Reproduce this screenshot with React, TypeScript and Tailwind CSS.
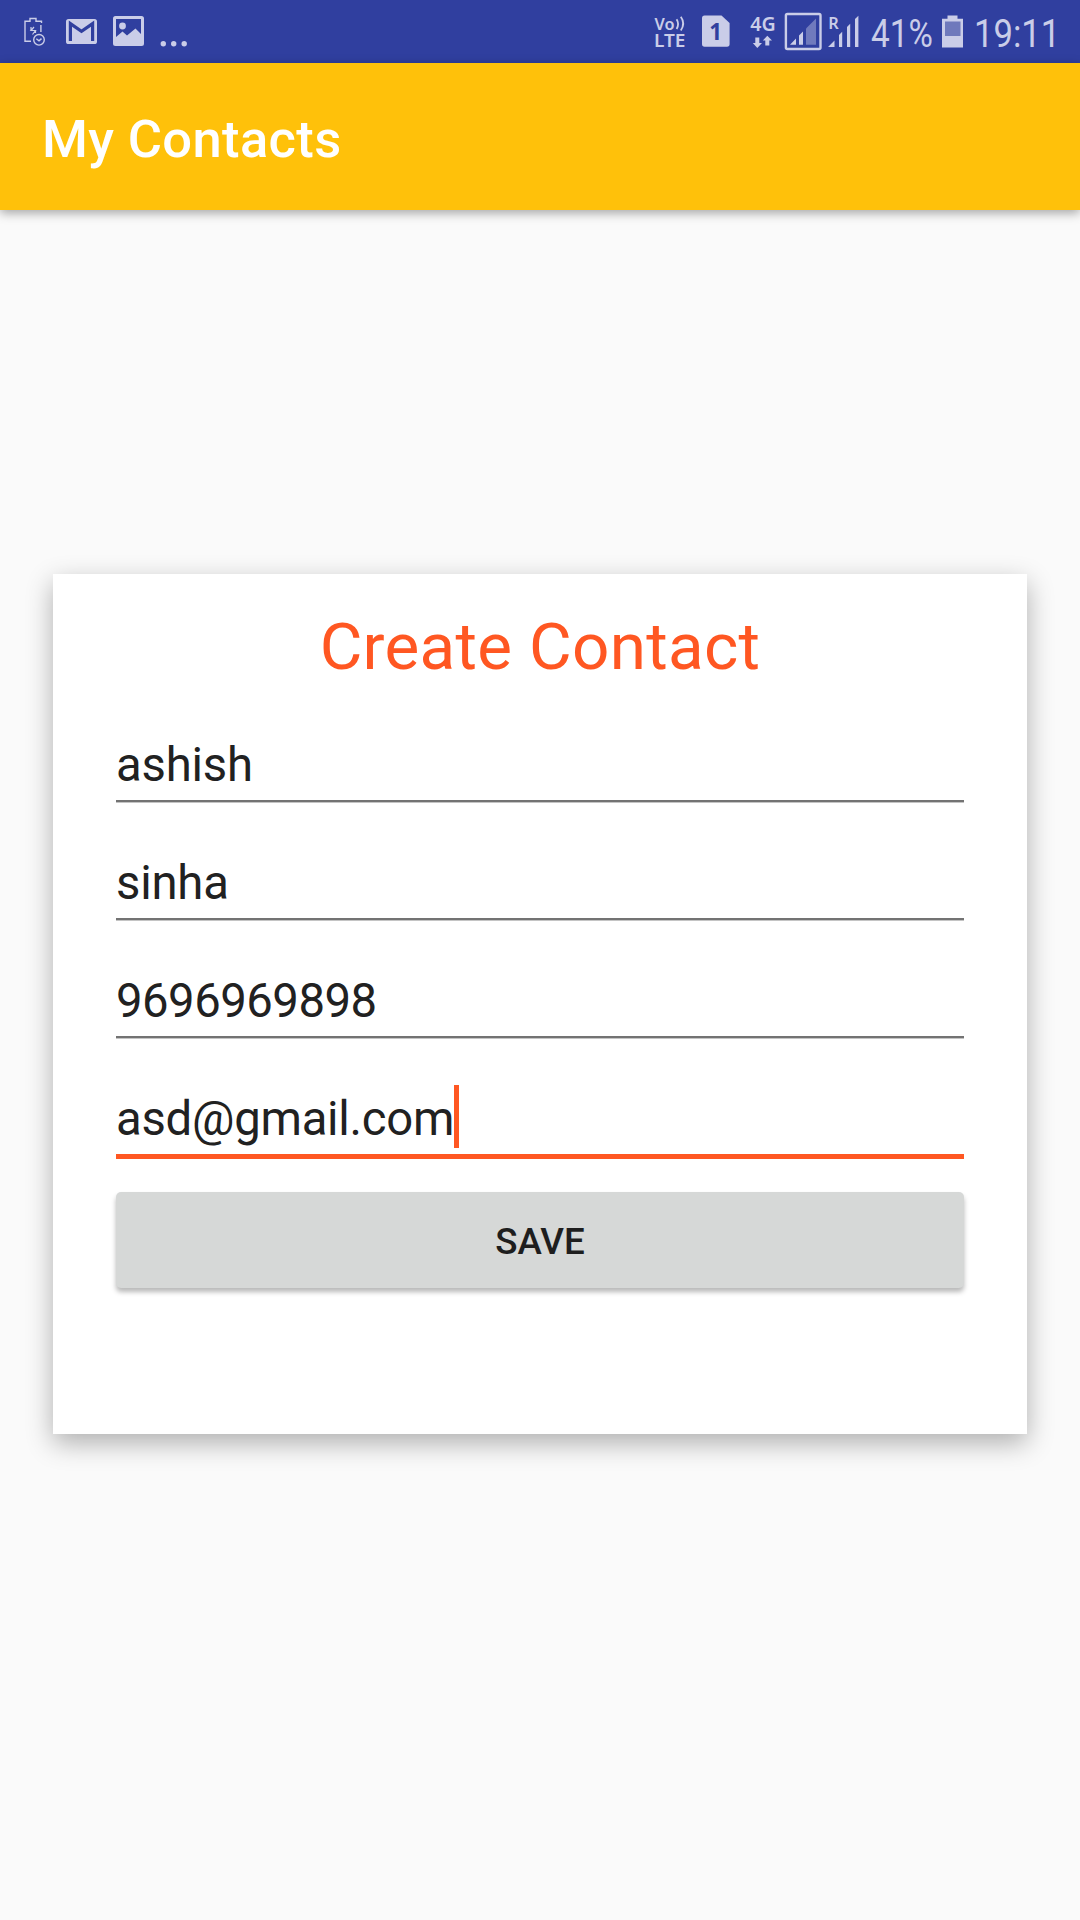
import React from "react";

const INK = "#cacde8";

function StatusBar() {
  return (
    <div className="flex h-[63px] w-full shrink-0 items-start bg-[#303f9f] text-[#cacde8]">
      {/* power saving */}
      <svg className="ml-[22px] mt-[14px] h-[34px] w-[26px] shrink-0" viewBox="22 14 26 34" fill="none" stroke={INK} strokeWidth="1.4">
        <path d="M31 41.3H25V21.3H30V18.5H36V21.3H41.5V23M40.9 25V32" />
        <path d="M34 27L31 30.5H35.5L32.5 34.5M31 27V30.5M35.5 30.5V33" strokeWidth="1.2" />
        <circle cx="39" cy="39.8" r="5.3" />
        <path d="M36.3 38.8L39 40.8L41.5 38.6" />
      </svg>
      {/* mail */}
      <svg className="ml-[16px] mt-[14px] h-[34px] w-[36px] shrink-0" viewBox="64 14 36 34">
        <rect x="66" y="19" width="31" height="25" rx="2.6" fill={INK} />
        <path d="M70.4 41V23.6L81.5 31.2L92.6 23.6V41" fill="none" stroke="#303f9f" strokeWidth="3.2" />
      </svg>
      {/* picture */}
      <svg className="ml-[12px] mt-[14px] h-[34px] w-[34px] shrink-0" viewBox="112 14 34 34">
        <path fillRule="evenodd" fill={INK} d="M115.5 16H141.5Q144 16 144 18.5V43.5Q144 46 141.5 46H115.5Q113 46 113 43.5V18.5Q113 16 115.5 16ZM116 19V37L122.5 31.5L127 35.5L135.5 28.5L141 34V19Z" />
        <circle cx="122.5" cy="26" r="3.4" fill={INK} />
      </svg>
      <svg className="ml-[14px] mt-[39px] h-[9px] w-[30px] shrink-0" viewBox="160 39 30 9" fill={INK}>
        <circle cx="163.3" cy="43.7" r="2.7" />
        <circle cx="173.7" cy="43.7" r="2.7" />
        <circle cx="184.2" cy="43.7" r="2.7" />
      </svg>

      {/* VoLTE */}
      <svg className="ml-[462px] mt-[12px] h-[38px] w-[38px] shrink-0 overflow-visible" viewBox="652 12 38 38" fill={INK} fontFamily="Noto Sans, sans-serif" fontWeight="600">
        <text x="654.6" y="29.6" fontSize="16.5" textLength="20" lengthAdjust="spacingAndGlyphs">Vo</text>
        <path d="M676.6 19.2Q679.6 24 676.6 29M680.8 16.8Q685.6 23.5 680.8 30.4" fill="none" stroke={INK} strokeWidth="1.8" />
        <text x="654" y="47" fontSize="17" textLength="31.5" lengthAdjust="spacingAndGlyphs">LTE</text>
      </svg>
      {/* SIM 1 */}
      <svg className="ml-[10px] mt-[14px] h-[34px] w-[32px] shrink-0" viewBox="700 14 32 34" fontFamily="Noto Sans, sans-serif" fontWeight="700">
        <path d="M704.5 15.5H721.5L729.6 23V44Q729.6 46.7 727 46.7H704.5Q702 46.7 702 44V18Q702 15.5 704.5 15.5Z" fill={INK} />
        <text x="709.3" y="40" fontSize="22.5" fill="#303f9f">1</text>
      </svg>
      {/* 4G */}
      <svg className="ml-[16px] mt-[12px] h-[38px] w-[30px] shrink-0 overflow-visible" viewBox="748 12 30 38" fill={INK} fontFamily="Noto Sans, sans-serif" fontWeight="600">
        <text x="750.3" y="31.4" fontSize="18.8" textLength="25.4" lengthAdjust="spacingAndGlyphs">4G</text>
        <path d="M755.3 37.5H759.3V43H762L757.3 48L752.8 43H755.3ZM765.3 45.5H769.3V40.5H772L767.3 35.8L762.8 40.5H765.3Z" />
      </svg>
      {/* boxed signal */}
      <svg className="ml-[6px] mt-[12px] h-[40px] w-[40px] shrink-0" viewBox="784 12 40 40" fill={INK}>
        <rect x="785.9" y="14" width="34.6" height="35" rx="1.5" fill="none" stroke={INK} strokeWidth="2.4" />
        <path d="M790 44.8L796 38.5V44.8ZM799 35.5L803 31.5V44.8H799Z" />
        <path d="M806 28.5L816 18.5V44.8H806Z" fillOpacity=".42" />
      </svg>
      {/* roaming signal */}
      <svg className="ml-[3px] mt-[12px] h-[40px] w-[34px] shrink-0 overflow-visible" viewBox="827 12 34 40" fill={INK} fontFamily="Noto Sans, sans-serif" fontWeight="600">
        <text x="828.2" y="29" fontSize="15.4" textLength="10.5" lengthAdjust="spacingAndGlyphs">R</text>
        <path d="M828 47L834.5 40.5V47ZM839 35L842.2 31.8V47H839ZM847 27L850.2 23.8V47H847ZM855 19L858.4 15.8V47H855Z" />
      </svg>
      <div className="ml-[10px] mt-[11px] h-[46px] w-[63px] shrink-0 origin-left scale-x-[.845] whitespace-nowrap font-['Roboto'] text-[39.4px] leading-[46px]">41%</div>
      {/* battery */}
      <svg className="ml-[6px] mt-[14px] h-[36px] w-[24px] shrink-0" viewBox="940 14 24 36" fill={INK}>
        <path d="M947.5 15.5H957.5V18.7H963V47.5H942V18.7H947.5Z" />
        <rect x="945" y="21.5" width="15.5" height="14.5" fill="#6f79bc" />
      </svg>
      <div className="ml-[10px] mt-[11px] h-[46px] w-[84px] shrink-0 origin-left scale-x-[.88] whitespace-nowrap font-['Roboto'] text-[39.4px] leading-[46px]">19:11</div>
    </div>
  );
}

const FIELDS = [
  { value: "ashish", tracking: "tracking-[-0.2px]" },
  { value: "sinha", tracking: "tracking-[-0.2px]" },
  { value: "9696969898", tracking: "tracking-[-0.5px]" },
];

export default function App() {
  return (
    <div className="flex h-[1920px] w-[1080px] flex-col overflow-hidden bg-[#fafafa] font-['Roboto',sans-serif]">
      <StatusBar />
      <header className="flex h-[147px] w-full shrink-0 items-center bg-[#ffc10a] pl-[42px] pt-[4px] shadow-[0_3px_10px_rgba(0,0,0,0.35)]">
        <h1 className="text-[52.5px] font-medium leading-[62px] tracking-[0.35px] text-white">My Contacts</h1>
      </header>

      <main className="mx-[53px] mt-[364px] flex h-[860px] shrink-0 flex-col bg-white px-[63px] shadow-[0_9px_25px_rgba(0,0,0,0.3)]">
        <h2 className="mt-[34px] h-[78px] text-center text-[65.6px] leading-[78px] tracking-[0.3px] text-[#ff5722]">Create Contact</h2>
        <div className="mt-[2px] flex flex-col">
          {FIELDS.map(({ value, tracking }) => (
            <div key={value} className="flex h-[118px] flex-col justify-end pb-[3px] text-[#212121]">
              <span className={`mb-[7px] h-[56px] text-[47.25px] leading-[56px] ${tracking}`}>{value}</span>
              <span className="h-[3px] border-b border-[#c4c4c4] bg-[#737373]" />
            </div>
          ))}
          <div className="flex h-[118px] flex-col pt-[43px]">
            <div className="flex h-[69px] shrink-0 items-start">
              <span className="mt-[6px] h-[56px] text-[47.25px] leading-[56px] tracking-[-0.25px] text-[#212121]">asd@gmail.com</span>
              <span className="h-[63px] w-[5px] bg-[#ff5722]" />
            </div>
            <span className="h-[5px] shrink-0 bg-[#ff5722]" />
          </div>
        </div>
        <button className="mt-[32px] h-[96px] shrink-0 rounded-[5px] bg-[#d6d8d7] pt-[4px] text-[36.75px] font-medium leading-none text-[#1e1e1e] shadow-[0_4px_5px_rgba(0,0,0,0.28)]">
          SAVE
        </button>
      </main>
    </div>
  );
}
